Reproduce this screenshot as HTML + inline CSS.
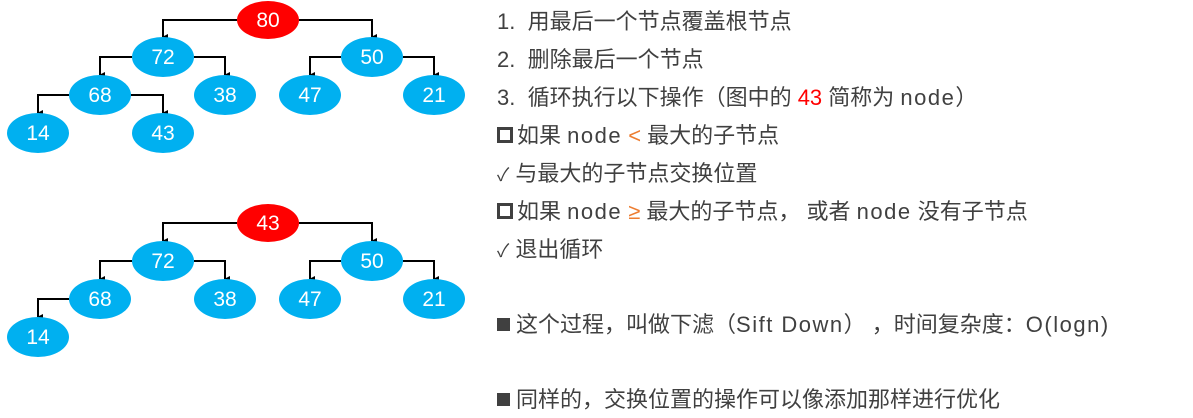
<!DOCTYPE html><html><head><meta charset="utf-8"><style>
body{margin:0;width:1193px;height:418px;background:#fff;position:relative;overflow:hidden;font-family:"Liberation Sans","Noto Sans CJK SC",sans-serif;}
.t{position:absolute;left:497px;font-size:22px;color:#404040;white-space:nowrap;line-height:24px}
.o{color:#ed7d31}.r{color:#f00}
.l{letter-spacing:1.5px}
.sq{display:inline-block;width:10px;height:10px;border:3px solid #404040;margin-right:4px;vertical-align:0}
.bs{display:inline-block;width:13px;height:13px;background:#404040;margin-right:6px;vertical-align:1px}
.ck{font-size:18px}
</style></head><body>
<svg width="480" height="418" style="position:absolute;left:0;top:0">
<defs><marker id="a" markerWidth="6" markerHeight="6" refX="3" refY="5" orient="auto" markerUnits="userSpaceOnUse"><path d="M0,0 L6,0 L3,6z" fill="#000"/></marker></defs>
<g stroke="#000" stroke-width="2" fill="none" marker-end="url(#a)">
<path d="M237,20H163V37"/><path d="M299,20H372V37"/>
<path d="M132,57H100V75"/><path d="M194,57H225V75"/>
<path d="M341,57H310V75"/><path d="M403,57H434V75"/>
<path d="M69,95H38V113"/><path d="M131,95H163V113"/>
<path d="M237,223H163V241"/><path d="M299,223H372V241"/>
<path d="M132,261H100V279"/><path d="M194,261H225V279"/>
<path d="M341,261H310V279"/><path d="M403,261H434V279"/>
<path d="M69,299H38V317"/>
</g>
<g fill="#00b0f0">
<ellipse cx="163" cy="57" rx="31" ry="20"/><ellipse cx="372" cy="57" rx="31" ry="20"/>
<ellipse cx="100" cy="95" rx="31" ry="20"/><ellipse cx="225" cy="95" rx="31" ry="20"/>
<ellipse cx="310" cy="95" rx="31" ry="20"/><ellipse cx="434" cy="95" rx="31" ry="20"/>
<ellipse cx="38" cy="133" rx="31" ry="20"/><ellipse cx="163" cy="133" rx="31" ry="20"/>
<ellipse cx="163" cy="261" rx="31" ry="20"/><ellipse cx="372" cy="261" rx="31" ry="20"/>
<ellipse cx="100" cy="299" rx="31" ry="20"/><ellipse cx="225" cy="299" rx="31" ry="20"/>
<ellipse cx="310" cy="299" rx="31" ry="20"/><ellipse cx="434" cy="299" rx="31" ry="20"/>
<ellipse cx="38" cy="337" rx="31" ry="20"/>
</g>
<g fill="#f00"><ellipse cx="268" cy="20" rx="31" ry="19"/><ellipse cx="268" cy="223" rx="31" ry="19"/></g>
<g font-family="Liberation Sans,sans-serif" font-size="21" fill="#fff" text-anchor="middle">
<text x="268" y="27">80</text><text x="163" y="64">72</text><text x="372" y="64">50</text>
<text x="100" y="102">68</text><text x="225" y="102">38</text><text x="310" y="102">47</text><text x="434" y="102">21</text>
<text x="38" y="140">14</text><text x="163" y="140">43</text>
<text x="268" y="230">43</text><text x="163" y="268">72</text><text x="372" y="268">50</text>
<text x="100" y="306">68</text><text x="225" y="306">38</text><text x="310" y="306">47</text><text x="434" y="306">21</text>
<text x="38" y="344">14</text>
</g></svg>
<div class="t" style="top:10px">1.&nbsp; 用最后一个节点覆盖根节点</div>
<div class="t" style="top:48px">2.&nbsp; 删除最后一个节点</div>
<div class="t" style="top:86px">3.&nbsp; 循环执行以下操作（图中的 <span class="r">43</span> 简称为 <span class="l">node</span>）</div>
<div class="t" style="top:124px"><span class="sq"></span>如果 <span class="l">node</span> <span class="o">&lt;</span> 最大的子节点</div>
<div class="t" style="top:162px"><span class="ck">✓</span> 与最大的子节点交换位置</div>
<div class="t" style="top:200px"><span class="sq"></span>如果 <span class="l">node</span> <span class="o">≥</span> 最大的子节点，&nbsp;或者 <span class="l">node</span> 没有子节点</div>
<div class="t" style="top:238px"><span class="ck">✓</span> 退出循环</div>
<div class="t" style="top:313px"><span class="bs"></span>这个过程，叫做下滤（<span class="l">Sift Down</span>）&nbsp;，时间复杂度：<span class="l">O(logn)</span></div>
<div class="t" style="top:388px"><span class="bs"></span>同样的，交换位置的操作可以像添加那样进行优化</div>
</body></html>
